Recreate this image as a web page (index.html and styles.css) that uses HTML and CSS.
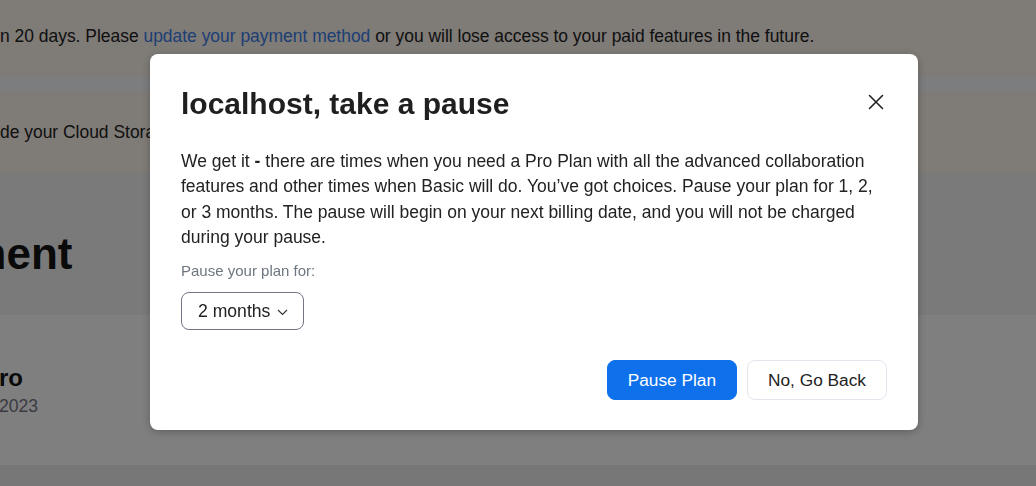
FILE: index.html
```html
<!DOCTYPE html>
<html lang="en">
<head>
<meta charset="utf-8">
<title>Take a pause</title>
<link rel="stylesheet" href="styles.css">
</head>
<body>
<div class="page">
  <div class="banner banner-first">
    <p class="banner-text">n 20 days. Please <a class="link" href="#">update your payment method</a> or you will lose access to your paid features in the future.</p>
  </div>
  <div class="band"></div>
  <div class="banner banner-second">
    <p class="banner-text">de your Cloud Storage plan to get more space for your recordings.</p>
  </div>
  <section class="head-area">
    <h1 class="page-title">Payment</h1>
  </section>
  <section class="plan-card">
    <div class="plan-name">Pro</div>
    <div class="plan-date">2023</div>
  </section>
  <div class="page-rest"></div>
</div>

<div class="overlay">
  <div class="modal" role="dialog">
    <div class="modal-header">
      <h2 class="modal-title">localhost, take a pause</h2>
      <button class="close-btn" aria-label="Close">
        <svg width="16" height="16" viewBox="0 0 16 16"><path d="M1.5 1.5 L14.5 14.5 M14.5 1.5 L1.5 14.5" stroke="#222222" stroke-width="1.6" fill="none" stroke-linecap="round"/></svg>
      </button>
    </div>
    <p class="modal-text">We get it <b>-</b> there are times when you need a Pro Plan with all the advanced collaboration features and other times when Basic will do. You’ve got choices. Pause your plan for 1, 2, or 3 months. The pause will begin on your next billing date, and you will not be charged during your pause.</p>
    <div class="field-label">Pause your plan for:</div>
    <button class="select">
      <span>2 months</span>
      <svg class="chev" width="11" height="7" viewBox="0 0 11 7"><polyline points="1,1 5.5,5.5 10,1" stroke="#333333" stroke-width="1.2" fill="none"/></svg>
    </button>
    <div class="modal-footer">
      <button class="btn btn-primary">Pause Plan</button>
      <button class="btn btn-secondary">No, Go Back</button>
    </div>
  </div>
</div>
</body>
</html>
```

FILE: styles.css
```css
* { box-sizing: border-box; }
html, body { margin: 0; padding: 0; }
body {
  font-family: "Liberation Sans", Arial, sans-serif;
  color: #222222;
  background: #eeeeee;
  overflow: hidden;
  width: 1036px;
  height: 486px;
}
.page { width: 1036px; }
.banner { background: #fef6ee; }
.banner-first { height: 77px; padding-top: 26px; }
.band { height: 14px; background: #f6fafe; }
.banner-second { height: 82px; padding-top: 31px; }
.banner-text {
  margin: 0;
  font-size: 17.45px;
  white-space: nowrap;
  color: #222222;
}
.link { color: #3d7ee8; text-decoration: none; }
.head-area {
  height: 142px;
  background: #f4f4f4;
  padding-top: 56px;
}
.page-title {
  margin: 0 0 0 -111px;
  font-size: 44px;
  line-height: 50px;
  font-weight: 700;
  color: #141414;
}
.plan-card {
  height: 150px;
  background: #ffffff;
  padding-top: 49px;
}
.plan-name {
  margin-left: -17px;
  font-size: 24px;
  font-weight: 700;
  line-height: 28px;
  color: #141414;
}
.plan-date {
  margin-left: -1px;
  margin-top: 4px;
  font-size: 17.6px;
  color: #747487;
}
.page-rest { height: 40px; background: #eeeeee; }

.overlay {
  position: fixed;
  inset: 0;
  background: rgba(0, 0, 0, 0.5);
  display: flex;
  align-items: flex-start;
  padding: 54px 0 0 150px;
}
.modal {
  width: 768px;
  background: #ffffff;
  border-radius: 8px;
  box-shadow: 0 2px 8px rgba(0, 0, 0, 0.25);
  padding: 33px 31px 30px 31px;
}
.modal-header {
  display: flex;
  justify-content: space-between;
  align-items: flex-start;
}
.modal-title {
  margin: 0;
  font-size: 30px;
  font-weight: 700;
  line-height: normal;
  color: #1f1f1f;
}
.close-btn {
  border: 0;
  background: none;
  padding: 0;
  margin: 7px 3px 0 0;
  width: 16px;
  height: 16px;
  display: block;
  cursor: pointer;
}
.close-btn svg { display: block; }
.modal-text {
  margin: 28px 0 0;
  font-size: 17.5px;
  line-height: 25.3px;
  color: #222222;
}
.modal-text b { font-weight: 700; }
.field-label {
  margin-top: 12px;
  font-size: 15px;
  color: #6e7680;
}
.select {
  margin-top: 13px;
  height: 38px;
  display: inline-flex;
  align-items: center;
  gap: 7px;
  padding: 0 15px 0 16px;
  border: 1px solid #747487;
  border-radius: 8px;
  background: #ffffff;
  font-family: inherit;
  font-size: 17.6px;
  color: #222222;
}
.chev { margin-top: 3px; display: block; }
.modal-footer {
  margin-top: 30px;
  display: flex;
  justify-content: flex-end;
  gap: 10px;
}
.btn {
  height: 40px;
  padding: 0 20px;
  border-radius: 8px;
  font-family: inherit;
  font-size: 17.3px;
  cursor: pointer;
}
.btn-primary {
  background: #0e71eb;
  border: 1px solid #0e71eb;
  color: #ffffff;
}
.btn-secondary {
  background: #ffffff;
  border: 1px solid #e4e4ed;
  color: #222222;
}
```
